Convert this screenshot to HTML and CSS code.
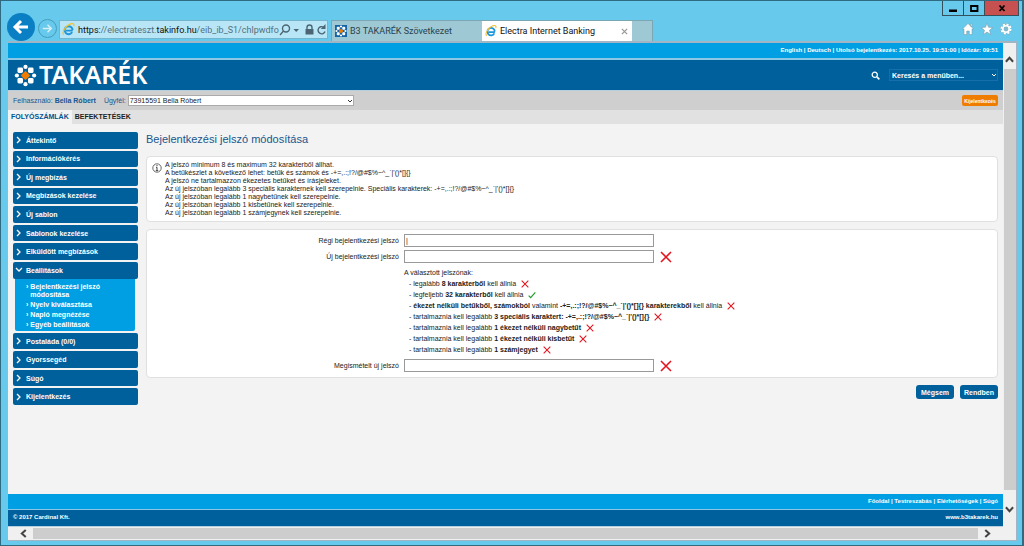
FILE: index.html
```html
<!DOCTYPE html>
<html lang="hu">
<head>
<meta charset="utf-8">
<title>Electra Internet Banking</title>
<link rel="stylesheet" href="styles.css">
</head>
<body>
<svg class="defs" aria-hidden="true">
  <symbol id="cross" viewBox="0 0 12 12"><path d="M1 1 11 11M11 1 1 11" fill="none" stroke="#e3161f" stroke-width="1.6"/></symbol>
  <symbol id="tick" viewBox="0 0 12 12"><path d="M1 7 4 10 11 2" fill="none" stroke="#1f9d2b" stroke-width="1.8"/></symbol>
  <symbol id="chev" viewBox="0 0 8 8"><path d="M2 1 5 4 2 7" fill="none" stroke="currentColor" stroke-width="1.3"/></symbol>
  <symbol id="ie" viewBox="0 0 14 14"><path d="M11.6 8.2H4.2M11.4 7.6A4.3 4.3 0 1 0 10.9 9.8" fill="none" stroke="#1e96dc" stroke-width="2.1"/><path d="M2 12.6C-.6 10.500 3.500 3.400 8.500 1.200 11.600-.1 13.600.8 12.500 3.600" fill="none" stroke="#f1c232" stroke-width="1.300"/></symbol>
  <symbol id="flower" viewBox="0 0 24 24"><rect x="8.500" y="8.500" width="7" height="7" rx="1" fill="#f07d00" transform="rotate(45 12 12)"/><g fill="#fff"><circle cx="12" cy="3" r="2.200"/><circle cx="12" cy="21" r="2.200"/><circle cx="3" cy="12" r="2.200"/><circle cx="21" cy="12" r="2.200"/><rect x="3.600" y="3.600" width="5.800" height="5.800" rx="1.500"/><rect x="14.600" y="3.600" width="5.800" height="5.800" rx="1.500"/><rect x="3.600" y="14.600" width="5.800" height="5.800" rx="1.500"/><rect x="14.600" y="14.600" width="5.800" height="5.800" rx="1.500"/></g></symbol>
</svg>
<div class="window">
  <header class="chrome">
    <div class="nav">
      <button class="back" aria-label="Vissza"><svg viewBox="0 0 28 28"><path d="M21 14H9M14 8 8 14 14 20" fill="none" stroke="#fff" stroke-width="3"/></svg></button>
      <button class="forward" aria-label="Előre"><svg viewBox="0 0 18 18"><path d="M4 9H13M9 5 13 9 9 13" fill="none" stroke="#d6f0fa" stroke-width="1.600"/></svg></button>
      <div class="address">
        <svg class="i14" aria-hidden="true"><use href="#ie"/></svg>
        <span class="url">https:<i>//electrateszt.</i>takinfo.hu<i>/eib_ib_S1/chlpwdfo</i></span>
        <svg class="tools" viewBox="0 0 48 14" aria-hidden="true"><g fill="none" stroke="#4b6672" stroke-width="1.400"><circle cx="7" cy="5.500" r="3.500"/><path d="M4.500 8 1 12"/><path d="M46 8.500A3.600 3.600 0 1 1 44.600 4.200"/><path d="M28 6V4.500A2.500 2.500 0 0 1 33 4.500V6"/></g><path d="M14.500 6H20L17.200 9ZM26.500 6H34.500V11.500H26.500ZM46.500 1V6H41.800Z" fill="#4b6672"/></svg>
      </div>
      <div class="tabs">
        <div class="tab"><svg class="i12 fav" aria-hidden="true"><use href="#flower"/></svg><span>B3 TAKARÉK Szövetkezet</span></div>
        <div class="tab on"><svg class="i12" aria-hidden="true"><use href="#ie"/></svg><span>Electra Internet Banking</span><button class="close" aria-label="Lap bezárása"><svg viewBox="0 0 8 8"><path d="M1 1 7 7M7 1 1 7" fill="none" stroke="#999" stroke-width="1.500"/></svg></button></div>
        <button class="newtab" aria-label="Új lap"></button>
      </div>
    </div>
    <div class="side">
      <div class="winbtns">
        <button aria-label="Kis méret"><svg viewBox="0 0 10 10"><path d="M1 6.500H9V9H1Z"/></svg></button>
        <button aria-label="Teljes méret"><svg viewBox="0 0 10 10"><path d="M2 3H8.500V8H2Z" fill="none" stroke="#000" stroke-width="1.800"/></svg></button>
        <button class="x" aria-label="Bezárás"><svg viewBox="0 0 10 10"><path d="M2.500 2.500 7.500 8M7.500 2.500 2.500 8" fill="none" stroke="#000" stroke-width="1.800"/></svg></button>
      </div>
      <div class="tooling">
        <button aria-label="Kezdőlap"><svg viewBox="0 0 12 12"><path d="M6 .5 11.500 6H10V11.500H7.300V8H4.700V11.500H2V6H.5ZM8.500 1H10V3H8.500Z" fill="#fff" stroke="#7d939c" stroke-width=".5"/></svg></button>
        <button aria-label="Kedvencek"><svg viewBox="0 0 12 12"><path d="M6 .3 7.500 4.300 11.800 4.500 8.500 7.200 9.600 11.500 6 9.100 2.400 11.500 3.500 7.200 .2 4.500 4.500 4.300Z" fill="#fff" stroke="#7d939c" stroke-width=".5"/></svg></button>
        <button aria-label="Eszközök"><svg viewBox="0 0 12 12"><circle cx="6" cy="6" r="4.600" fill="none" stroke="#7d939c" stroke-width="2.600" stroke-dasharray="2 1.600"/><circle cx="6" cy="6" r="4.600" fill="none" stroke="#fff" stroke-width="2" stroke-dasharray="2 1.600"/><circle cx="6" cy="6" r="3.200" fill="#83b9cc" stroke="#fff" stroke-width="1.600"/></svg></button>
      </div>
    </div>
  </header>
  <div class="view">
    <div class="page">
      <nav class="topline">
        <a href="#en">English</a> | <a href="#de">Deutsch</a> | Utolsó bejelentkezés: 2017.10.25. 19:51:00 | Időzár: <b>09:51</b>
      </nav>
      <div class="brand">
        <a class="logo" href="#home"><svg aria-hidden="true"><use href="#flower"/></svg><span>TAKARÉK</span></a>
        <div class="search">
          <svg viewBox="0 0 10 10" aria-hidden="true"><circle cx="4.200" cy="4.200" r="2.900" fill="none" stroke="#fff" stroke-width="1.400"/><path d="M6.500 6.500 9.300 9.300" stroke="#fff" stroke-width="1.800"/></svg>
          <span class="pick"><select aria-label="Keresés a menüben"><option>Keresés a menüben...</option></select><svg viewBox="0 0 6 6" aria-hidden="true"><path d="M1 2 3 4 5 2" fill="none" stroke="#fff"/></svg></span>
        </div>
      </div>
      <div class="user">
        <span>Felhasználó: <b>Bella Róbert</b></span>
        <label for="client">Ügyfél:</label>
        <span class="client"><select id="client"><option>73915591 Bella Róbert</option></select><svg viewBox="0 0 6 6" aria-hidden="true"><path d="M1 2 3 4 5 2" fill="none" stroke="#333"/></svg></span>
        <button class="logout">Kijelentkezés</button>
      </div>
      <nav class="sections"><a class="on" href="#accounts">FOLYÓSZÁMLÁK</a><a href="#invest">BEFEKTETÉSEK</a></nav>
      <div class="body">
        <nav class="menu">
          <a href="#1"><svg><use href="#chev"/></svg>Áttekintő</a>
          <a href="#2"><svg><use href="#chev"/></svg>Információkérés</a>
          <a href="#3"><svg><use href="#chev"/></svg>Új megbízás</a>
          <a href="#4"><svg><use href="#chev"/></svg>Megbízások kezelése</a>
          <a href="#5"><svg><use href="#chev"/></svg>Új sablon</a>
          <a href="#6"><svg><use href="#chev"/></svg>Sablonok kezelése</a>
          <a href="#7"><svg><use href="#chev"/></svg>Elküldött megbízások</a>
          <div class="group">
            <a class="open" href="#8"><svg><use href="#chev"/></svg>Beállítások</a>
            <ul>
              <li><a class="cur" href="#81">Bejelentkezési jelszó módosítása</a></li>
              <li><a href="#82">Nyelv kiválasztása</a></li>
              <li><a href="#83">Napló megnézése</a></li>
              <li><a href="#84">Egyéb beállítások</a></li>
            </ul>
          </div>
          <a href="#9"><svg><use href="#chev"/></svg>Postaláda (0/0)</a>
          <a href="#10"><svg><use href="#chev"/></svg>Gyorssegéd</a>
          <a href="#11"><svg><use href="#chev"/></svg>Súgó</a>
          <a href="#12"><svg><use href="#chev"/></svg>Kijelentkezés</a>
        </nav>
        <main>
          <h1>Bejelentkezési jelszó módosítása</h1>
          <section class="card info">
            <svg viewBox="0 0 10 10" aria-hidden="true"><circle cx="5" cy="5" r="4.200" fill="none" stroke="#444" stroke-width=".8"/><path d="M5 2V3.200M4 4.300H5V7.500M3.800 7.600H6.200" fill="none" stroke="#444"/></svg>
            <div>
              <p>A jelszó minimum 8 és maximum 32 karakterből állhat.</p>
              <p>A betűkészlet a következő lehet: betűk és számok és -+=,.:;!?/@#$%~^_`|'()*[]{}</p>
              <p>A jelszó ne tartalmazzon ékezetes betűket és írásjeleket.</p>
              <p>Az új jelszóban legalább 3 speciális karakternek kell szerepelnie. Speciális karakterek: -+=,.:;!?/@#$%~^_`|'()*[]{}</p>
              <p>Az új jelszóban legalább 1 nagybetűnek kell szerepelnie.</p>
              <p>Az új jelszóban legalább 1 kisbetűnek kell szerepelnie.</p>
              <p>Az új jelszóban legalább 1 számjegynek kell szerepelnie.</p>
            </div>
          </section>
          <form id="pw" class="card form">
            <label for="old">Régi bejelentkezési jelszó</label>
            <div class="field"><input id="old" type="text" value="|"></div>
            <label for="new">Új bejelentkezési jelszó</label>
            <div class="field"><input id="new" type="password"><svg><use href="#cross"/></svg></div>
            <div class="rules">
              <p>A választott jelszónak:</p>
              <ul>
                <li><span>- legalább <b>8 karakterből</b> kell állnia</span><svg><use href="#cross"/></svg></li>
                <li><span>- legfeljebb <b>32 karakterből</b> kell állnia</span><svg><use href="#tick"/></svg></li>
                <li><span>- <b>ékezet nélküli betűkből, számokból</b> valamint <b>-+=,.:;!?/@#$%~^_`|'()*[]{} karakterekből</b> kell állnia</span><svg><use href="#cross"/></svg></li>
                <li><span>- tartalmaznia kell legalább <b>3 speciális karaktert: -+=,.:;!?/@#$%~^_`|'()*[]{}</b></span><svg><use href="#cross"/></svg></li>
                <li><span>- tartalmaznia kell legalább <b>1 ékezet nélküli nagybetűt</b></span><svg><use href="#cross"/></svg></li>
                <li><span>- tartalmaznia kell legalább <b>1 ékezet nélküli kisbetűt</b></span><svg><use href="#cross"/></svg></li>
                <li><span>- tartalmaznia kell legalább <b>1 számjegyet</b></span><svg><use href="#cross"/></svg></li>
              </ul>
            </div>
            <label for="rep">Megismételt új jelszó</label>
            <div class="field"><input id="rep" type="password"><svg><use href="#cross"/></svg></div>
          </form>
          <div class="actions"><button type="button">Mégsem</button><button form="pw">Rendben</button></div>
        </main>
      </div>
      <footer>
        <nav class="links"><a href="#main">Főoldal</a> | <a href="#custom">Testreszabás</a> | <a href="#contact">Elérhetőségek</a> | <a href="#help">Súgó</a></nav>
        <div class="copy"><span>© 2017 Cardinal Kft.</span><a href="#www">www.b3takarek.hu</a></div>
      </footer>
    </div>
    <div class="vbar"><svg viewBox="0 0 8 6"><path d="M.8 5 4 1.500 7.200 5" fill="none" stroke="#444" stroke-width="1.800"/></svg><i></i><svg viewBox="0 0 8 6"><path d="M.8 1 4 4.500 7.200 1" fill="none" stroke="#444" stroke-width="1.800"/></svg></div>
    <div class="hbar"><svg viewBox="0 0 6 8"><path d="M5 .8 1.500 4 5 7.200" fill="none" stroke="#444" stroke-width="1.800"/></svg><i></i><svg viewBox="0 0 6 8"><path d="M1 .8 4.500 4 1 7.200" fill="none" stroke="#444" stroke-width="1.800"/></svg></div>
  </div>
</div>
</body>
</html>
```
FILE: styles.css
```css
* { box-sizing: border-box; }
body { margin: 0; font-family: "Liberation Sans", Arial, sans-serif; font-size: 7px; color: #222; }
button, input, select { font: inherit; color: inherit; margin: 0; }
button { padding: 0; border: 0; background: none; display: grid; place-items: center; }
a { color: inherit; text-decoration: none; }
p, ul, h1 { margin: 0; padding: 0; }
ul { list-style: none; }
svg { flex: none; }
.defs { position: absolute; width: 0; height: 0; }
.window { min-height: 100vh; display: flex; flex-direction: column; background: #67c9eb; border: 1px solid #2f6a80; border-right-width: 2px; padding: 0 5px 4px 6px; }

.chrome { display: flex; justify-content: space-between; height: 40px; }
.nav { display: flex; align-items: flex-end; min-width: 0; }
.back { width: 28px; height: 28px; border-radius: 50%; background: #0a7fc3; margin-right: 3px; }
.back svg { width: 28px; height: 28px; }
.forward { width: 19px; height: 19px; border-radius: 50%; border: 1px solid #469dbd; margin: 0 2px 3px 0; }
.forward svg { width: 17px; height: 17px; }
.address { display: flex; align-items: center; gap: 3px; width: 269px; height: 19px; margin-bottom: 2px; padding-left: 2px; background: #b8e6f6; border: 1px solid #74b4cc; }
.i14 { width: 13px; height: 13px; }
.url { flex: 1; min-width: 0; font: 9px Roboto, sans-serif; color: #111; white-space: nowrap; }
.url i { font-style: normal; color: #54717d; }
.tools { width: 48px; height: 14px; }
.tabs { display: flex; margin-left: 3px; height: 21px; border: 1px solid #7ba6b4; border-bottom: 0; font: 9px Roboto, sans-serif; color: #27434d; }
.tab { display: flex; align-items: center; gap: 3px; width: 150px; padding: 0 4px 0 3px; background: #9fc8d5; white-space: nowrap; }
.tab.on { background: #fff; color: #111; }
.i12 { width: 12px; height: 12px; }
.fav { background: #1464a5; }
.close { margin-left: auto; }
.close svg { width: 7px; height: 7px; }
.newtab { width: 20px; background: #9fc8d5; }
.side { display: flex; flex-direction: column; align-items: flex-end; justify-content: space-between; margin-right: -2px; }
.winbtns { display: flex; height: 15px; border: 1px solid #35505b; border-top: 0; }
.winbtns button { width: 21px; border-right: 1px solid #35505b; }
.winbtns .x { width: 33px; background: #c75050; border: 0; }
.winbtns svg { width: 10px; height: 10px; }
.tooling { display: flex; gap: 7px; margin: 0 7px 6px 0; }
.tooling svg { width: 12px; height: 12px; display: block; }

.view { flex: 1; display: grid; grid-template-columns: minmax(0, 1fr) 13px; grid-template-rows: 1fr 13px; border: 1px solid #a2b5c4; border-top-width: 2px; background: #f0f0f0; }
.page { display: flex; flex-direction: column; background: #f3f3f3; }
.topline { height: 17px; padding-right: 5px; background: #009fe3; border-bottom: 2px solid #8cc8e6; color: #fff; font-size: 6px; line-height: 15px; text-align: right; font-weight: bold; }
.brand { display: flex; justify-content: space-between; align-items: center; height: 31px; padding: 0 5px 0 6px; background: #00609c; border-bottom: 1px solid #b5cfe0; color: #fff; }
.logo { display: flex; align-items: center; gap: 2px; }
.logo svg { width: 23px; height: 23px; }
.logo span { font: 600 25px/28px "Noto Sans", sans-serif; margin-bottom: 2px; }
.search { display: flex; align-items: center; gap: 9px; }
.search > svg { width: 9px; height: 9px; }
.pick, .client { position: relative; display: flex; }
.pick svg, .client svg { position: absolute; right: 1px; top: 3px; width: 6px; height: 6px; }
select { appearance: none; border-radius: 0; }
.pick select { width: 109px; height: 12px; border: 1px solid #176faa; background: none; padding: 0 2px; font-size: 7px; font-weight: bold; }
.user { display: flex; align-items: center; height: 19px; padding: 0 5px; background: #cfcfcf; font-size: 7px; color: #17568f; }
.user label { margin: 0 2px 0 8px; }
.client select { width: 226px; height: 11px; background: #fff; border: 1px solid #aaa; color: #222; padding: 0 1px; font-size: 7px; }
.logout { margin-left: auto; width: 36px; height: 11px; background: #ef7d00; border-radius: 2px; color: #fff; font-size: 5px; font-weight: bold; }
.sections { display: flex; height: 14px; background: #e1e1e1; font-size: 7px; line-height: 14px; font-weight: bold; }
.sections a { padding: 0 3px; }
.sections .on { background: #f3f3f3; color: #00528e; }

.body { flex: 1; display: flex; gap: 8px; padding: 8px 5px 0; align-items: flex-start; }
.menu { flex: none; width: 125px; min-height: 273px; display: flex; flex-direction: column; gap: 2px; font-size: 7px; color: #fff; font-weight: bold; }
.menu > a, .open { display: flex; align-items: center; gap: 3px; padding-left: 2px; background: #00609c; border-radius: 2px; }
.menu > a { flex: 1 0 16px; }
.open { height: 17px; }
.menu svg { width: 8px; height: 8px; }
.open svg { transform: rotate(90deg); }
.group ul { margin: 0 3px 0 2px; padding: 3px 15px 1px 11px; background: #009fe3; border-radius: 0 0 2px 2px; }
.group li { display: flex; line-height: 8px; padding: 1px 0; }
.group li::before { content: "›"; margin-right: 2px; }
main { flex: 1; min-width: 0; }
h1 { font-size: 11px; line-height: 14px; font-weight: normal; color: #17568f; }
.card { background: #fff; border: 1px solid #e0e0e0; border-radius: 4px; }
.info { display: flex; gap: 3px; margin: 10px 0 7px; padding: 4px 5px; line-height: 8px; }
.info svg { width: 10px; height: 10px; margin-top: 2px; }
.form { display: grid; grid-template-columns: 252px 1fr; column-gap: 5px; row-gap: 3px; padding: 4px 0 5px; line-height: 13px; }
.form label { text-align: right; }
.field { display: flex; align-items: center; gap: 6px; }
.field input { width: 250px; height: 13px; padding: 0 1px; border: 1px solid #999; background: #fff; border-radius: 0; }
.field svg { width: 12px; height: 12px; }
.rules { grid-column: 2; padding: 1px 0; line-height: 11px; }
.rules li { display: flex; align-items: center; gap: 5px; padding-left: 5px; }
.rules svg { width: 8px; height: 8px; }
.actions { display: flex; justify-content: flex-end; gap: 6px; margin-top: 7px; }
.actions button { width: 38px; height: 14px; border-radius: 3px; background: #00609c; color: #fff; font-weight: bold; font-size: 7px; }

footer { color: #fff; font-size: 6px; font-weight: bold; }
.links { height: 16px; line-height: 14px; padding-right: 5px; background: #009fe3; border-bottom: 1px solid #8cc8e6; text-align: right; }
.copy { display: flex; justify-content: space-between; height: 17px; line-height: 15px; padding: 0 5px; background: #00609c; border-bottom: 1px solid #b5cfe0; }
.vbar, .hbar { display: flex; align-items: center; }
.vbar { grid-column: 2; grid-row: 1; flex-direction: column; }
.vbar i { flex: 1; width: 12px; background: #cdcdcd; margin: 6px 0 16px; }
.vbar svg { width: 9px; height: 7px; margin: 13px 0 0; }
.vbar svg:last-child { margin: 0 0 14px; }
.hbar { grid-row: 2; grid-column: 1; }
.hbar i { flex: 1; height: 11px; background: #cdcdcd; margin: 0 6px 0 6px; }
.hbar svg { width: 7px; height: 9px; margin-left: 12px; }
.hbar svg:last-child { margin: 0 12px 0 0; }
```
